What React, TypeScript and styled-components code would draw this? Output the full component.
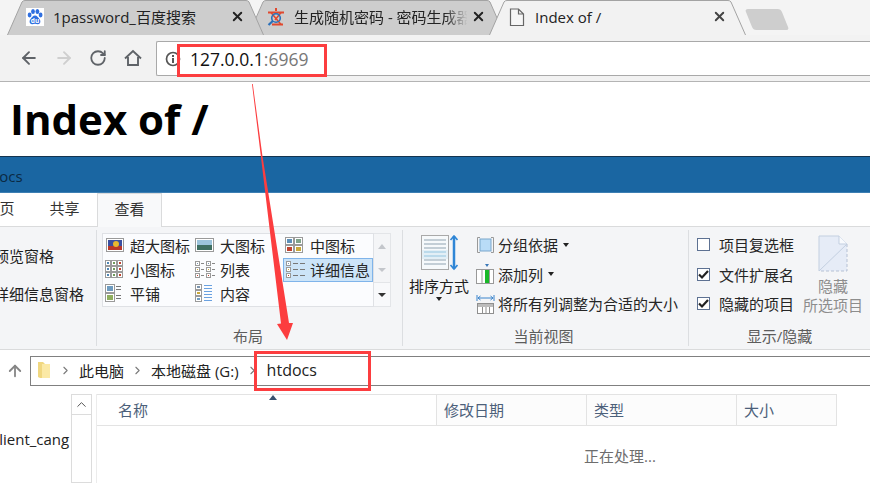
import React from "react";
import styled, { createGlobalStyle } from "styled-components";
import { ArrowLeft, ArrowRight, RotateCw, ArrowUp, ChevronRight, ChevronUp, X } from "lucide-react";

const GlobalStyle = createGlobalStyle`
  html, body {
    margin: 0;
    padding: 0;
    background: #fff;
  }
  * {
    box-sizing: border-box;
  }
`;

const Page = styled.div`
  position: relative;
  width: 870px;
  height: 483px;
  overflow: hidden;
  font-family: "Open Sans", "Noto Sans CJK SC", sans-serif;
  color: #1e1e1e;
`;

const TabStrip = styled.div`
  height: 35px;
  display: flex;
  padding-left: 7px;
  background: #f4f4f4;
`;

const BrowserTab = styled.div<{ $z: number }>`
  position: relative;
  z-index: ${(p) => p.$z};
  width: 257px;
  height: 35px;
  margin-right: -16px;
  display: flex;
  align-items: center;
  padding: 0 19px 2px 19px;
  font-size: 15px;
  color: #222;
`;

const TabShape = styled.svg`
  position: absolute;
  left: 0;
  top: 0;
  z-index: -1;
`;

const TabIcon = styled.svg`
  flex: none;
  width: 18px;
  height: 18px;
  margin-right: 9px;
`;

const TabTitle = styled.span<{ $fade?: boolean }>`
  flex: 1;
  white-space: nowrap;
  overflow: hidden;
  ${(p) => p.$fade && "mask-image: linear-gradient(to right, #000 85%, transparent 98%);"}
`;

const NewTab = styled.div`
  width: 36px;
  height: 21px;
  margin: 9px 0 0 19px;
  background: #cecece;
  border-radius: 3px;
  transform: skewX(22deg);
`;

const Toolbar = styled.div`
  height: 47px;
  display: flex;
  align-items: flex-start;
  padding: 6px 0 0 18px;
  background: #f2f2f2;
  border-bottom: 1px solid #b4b4b4;
`;

const NavButton = styled.div<{ $faded?: boolean }>`
  flex: none;
  width: 35px;
  height: 34px;
  display: flex;
  align-items: center;
  padding-left: 1px;
  color: ${(p) => (p.$faded ? "#cfcfcf" : "#5f6368")};
`;

const Omnibox = styled.div`
  flex: 1;
  height: 35px;
  margin-left: -2px;
  display: flex;
  align-items: center;
  padding-left: 8px;
  background: #fff;
  border: 1px solid #a9a9a9;
  border-right: none;
  border-radius: 2px 0 0 2px;
  font-size: 17.5px;
`;

const Url = styled.span`
  margin-left: 9px;
  color: #111;
`;

const UrlPort = styled.span`
  color: #777;
`;

const Heading = styled.h1`
  height: 74px;
  margin: 0;
  padding: 11px 0 0 10px;
  font-size: 42px;
  line-height: 52px;
  font-weight: 700;
  color: #000;
`;

const TitleBar = styled.div`
  height: 37px;
  padding: 10px 0 0 0;
  background: #1a66a2;
  border-top: 1px solid #14344f;
  border-bottom: 1px solid #3d7fb3;
  font-size: 15px;
  line-height: 18px;
  color: #0b2a44;
`;

const TitleText = styled.span`
  display: block;
  margin-left: -10px;
`;

const RibbonTabs = styled.div`
  height: 33px;
  display: flex;
  margin-left: -33px;
  font-size: 15px;
`;

const RibbonTab = styled.div<{ $active?: boolean }>`
  width: 65px;
  height: ${(p) => (p.$active ? "34px" : "33px")};
  padding-bottom: 4px;
  position: relative;
  z-index: 1;
  display: flex;
  align-items: center;
  justify-content: center;
  color: #333;
  ${(p) => p.$active && "background: #f8f9fa; border: 1px solid #dadbdc; border-bottom: none;"}
`;

const Ribbon = styled.div`
  height: 124px;
  display: flex;
  padding: 3px 0;
  background: #f4f5f7;
  border-top: 1px solid #dadbdc;
  border-bottom: 1px solid #dadbdc;
  font-size: 15px;
`;

const Group = styled.div<{ $width: number; $last?: boolean }>`
  flex: none;
  width: ${(p) => p.$width}px;
  display: flex;
  flex-direction: column;
  ${(p) => !p.$last && "border-right: 1px solid #dcdee1;"}
`;

const GroupBody = styled.div`
  flex: 1;
  display: flex;
`;

const GroupLabel = styled.div<{ $offset?: number }>`
  height: 18px;
  margin-left: ${(p) => p.$offset ?? 0}px;
  white-space: nowrap;
  text-align: center;
  font-size: 15px;
  line-height: 16px;
  color: #5c5c5c;
`;

const Panes = styled.div`
  padding-top: 8px;
  margin-left: -6px;
  white-space: nowrap;
`;

const PaneRow = styled.div`
  height: 38px;
  padding-bottom: 4px;
  display: flex;
  align-items: center;
`;

const Gallery = styled.div`
  display: flex;
  height: 74px;
  margin: 3px 0 0 5px;
`;

const GalleryGrid = styled.div`
  width: 272px;
  height: 74px;
  display: grid;
  grid-template-columns: repeat(3, 90px);
  grid-auto-rows: 24px;
  background: #fbfcfe;
  border: 1px solid #dfe1e5;
`;

const GalleryItem = styled.div<{ $selected?: boolean }>`
  display: flex;
  align-items: center;
  gap: 3px;
  padding: 0 0 2px 2px;
  white-space: nowrap;
  color: #262626;
  ${(p) => p.$selected && "background: #cce4f8; box-shadow: inset 0 0 0 1px #7fb4ea;"}
`;

const GalleryIconBox = styled.svg`
  flex: none;
  width: 22px;
  height: 20px;
`;

const GalleryScroll = styled.div`
  width: 17px;
  display: grid;
  grid-template-rows: 24px 24px 24px;
  border: 1px solid #e3e5e8;
  border-left: none;
`;

const ScrollCell = styled.div<{ $bordered?: boolean }>`
  display: flex;
  align-items: center;
  justify-content: center;
  ${(p) => p.$bordered && "border-top: 1px solid #e3e5e8; background: #f8f9fb;"}
`;

const Triangle = styled.span<{ $up?: boolean; $dark?: boolean }>`
  display: block;
  width: 0;
  height: 0;
  border-left: 4px solid transparent;
  border-right: 4px solid transparent;
  ${(p) =>
    p.$up
      ? `border-bottom: 5px solid ${p.$dark ? "#38506e" : "#c3c6cb"};`
      : `border-top: 4px solid ${p.$dark ? "#333" : "#c3c6cb"};`}
`;

const SortColumn = styled.div`
  flex: none;
  width: 66px;
  padding: 5px 0 0 6px;
  display: flex;
  flex-direction: column;
  align-items: center;
  white-space: nowrap;
`;

const SortLabel = styled.div`
  margin-top: 5px;
  height: 20px;
  line-height: 20px;
`;

const Caret = styled.span`
  display: inline-block;
  width: 0;
  height: 0;
  border-left: 3.5px solid transparent;
  border-right: 3.5px solid transparent;
  border-top: 4px solid #222;
`;

const SortCaret = styled(Caret)`
  margin-top: 1px;
`;

const ActionColumn = styled.div`
  margin-left: 7px;
  padding-top: 1px;
`;

const ActionRow = styled.div`
  height: 29.5px;
  padding-bottom: 2px;
  display: flex;
  align-items: center;
  white-space: nowrap;
  color: #262626;
`;

const ActionIcon = styled.svg`
  flex: none;
  width: 19px;
  height: 22px;
  margin-right: 3px;
`;

const ActionCaret = styled(Caret)`
  margin-left: 5px;
`;

const CheckColumn = styled.div`
  margin-left: 8px;
  padding-top: 1px;
  width: 106px;
`;

const CheckBox = styled.span`
  flex: none;
  width: 13px;
  height: 13px;
  margin-right: 9px;
  background: #fff;
  border: 1px solid #5d7192;
  display: flex;
  align-items: center;
  justify-content: center;
`;

const HideButton = styled.div`
  width: 60px;
  padding-top: 5px;
  display: flex;
  flex-direction: column;
  align-items: center;
  white-space: nowrap;
  color: #8d8d8d;
`;

const HideIcon = styled.svg`
  width: 30px;
  height: 37px;
  margin-bottom: 5px;
`;

const HideLine = styled.div`
  height: 19px;
  line-height: 19px;
`;

const NavBar = styled.div`
  height: 43px;
  display: flex;
  align-items: flex-start;
  padding-top: 6px;
  font-size: 15px;
`;

const UpButton = styled.div`
  width: 30px;
  height: 30px;
  display: flex;
  align-items: center;
  justify-content: center;
  color: #858585;
`;

const PathBox = styled.div`
  flex: 1;
  height: 30px;
  display: flex;
  align-items: center;
  padding: 0 0 2px 6px;
  border: 1px solid #808080;
  border-right: none;
  color: #222;
`;

const Crumb = styled.span<{ $large?: boolean }>`
  white-space: nowrap;
  font-size: ${(p) => (p.$large ? "16px" : "15px")};
`;

const Sep = styled.span<{ $w: number }>`
  flex: none;
  width: ${(p) => p.$w}px;
  display: flex;
  align-items: center;
  justify-content: center;
  color: #7a7a7a;
`;

const Lower = styled.div`
  height: 90px;
  display: flex;
  padding-top: 1px;
  font-size: 15px;
`;

const TreePane = styled.div`
  width: 71px;
  padding-top: 35px;
  overflow: hidden;
  white-space: nowrap;
`;

const TreeText = styled.div`
  margin-left: -8px;
  line-height: 20px;
  color: #222;
`;

const TreeScroll = styled.div`
  flex: none;
  width: 21px;
  border: 1px solid #dcdcdc;
`;

const TreeScrollUp = styled.div`
  height: 20px;
  display: flex;
  align-items: center;
  justify-content: center;
  color: #555;
  border-bottom: 1px solid #dcdcdc;
`;

const ListPane = styled.div`
  position: relative;
  flex: 1;
  margin-left: 4px;
  border-left: 1px solid #ececec;
`;

const SortMark = styled.div`
  position: absolute;
  left: 172px;
  top: 1px;
`;

const HeaderRow = styled.div`
  width: 740px;
  height: 32px;
  display: grid;
  grid-template-columns: 339px 150px 150px 100px;
  background: #fff;
  border: solid #e3e3e3;
  border-width: 1px 1px 1px 0;
  color: #4c607a;
`;

const HeaderCell = styled.div<{ $first?: boolean; $indent: number }>`
  display: flex;
  align-items: center;
  padding: 0 0 2px ${(p) => p.$indent}px;
  ${(p) => !p.$first && "background: #fcfcfc; border-left: 1px solid #e3e3e3;"}
`;

const Busy = styled.div`
  margin: 20px 0 0 487px;
  color: #6d6d6d;
  font-size: 15px;
  line-height: 20px;
`;

const Annotations = styled.svg`
  position: absolute;
  left: 0;
  top: 0;
  z-index: 5;
  pointer-events: none;
`;

const tabPath = "M0.5 35 L15 2 Q16 0.5 18 0.5 L239 0.5 Q241 0.5 242 2 L256.5 35";

const Shape: React.FC<{ fill: string; stroke: string }> = ({ fill, stroke }) => (
  <TabShape width="257" height="35" viewBox="0 0 257 35">
    <path d={tabPath} fill={fill} stroke={stroke} />
  </TabShape>
);

const BaiduIcon = () => (
  <TabIcon viewBox="0 0 18 18">
    <rect width="18" height="18" fill="#fff" />
    <g fill="#2f6fe0">
      <ellipse cx="3.6" cy="7" rx="1.9" ry="2.4" />
      <ellipse cx="7" cy="3.6" rx="1.9" ry="2.5" />
      <ellipse cx="11.4" cy="3.6" rx="1.9" ry="2.5" />
      <ellipse cx="14.6" cy="7" rx="1.9" ry="2.4" />
      <path d="M9 7.5c2.2 0 3 2 4.400 3.400 1.600 1.600 1.300 5-1.400 5.300-1.200.1-2-.5-3-.5s-1.800.6-3 .5c-2.700-.3-3-3.700-1.400-5.300C6 9.500 6.800 7.500 9 7.500z" />
    </g>
    <text x="9" y="15" textAnchor="middle" fontSize="6.500" fontWeight="700" fill="#fff" fontFamily="Open Sans, sans-serif">du</text>
  </TabIcon>
);

const StarIcon = () => (
  <TabIcon viewBox="0 0 18 18">
    <path d="M9 0v3M1 4.500h16M5 16.500h11" stroke="#e0492f" strokeWidth="2" fill="none" />
    <path d="M4 4.500l10 12M14 4.500L8 12" stroke="#e0492f" strokeWidth="1.600" fill="none" />
    <circle cx="9" cy="10" r="4.300" fill="none" stroke="#2a6fb8" strokeWidth="1.600" />
    <path d="M5.800 13L1.500 17" stroke="#2a6fb8" strokeWidth="2.200" fill="none" />
  </TabIcon>
);

const DocIcon = () => (
  <TabIcon viewBox="0 0 18 18">
    <path d="M2.500 1h8l5 5v11.500h-13z M10.500 1v5h5" fill="#f6f6f6" stroke="#666" strokeWidth="1.200" />
  </TabIcon>
);

const HomeIcon = () => (
  <svg width="18" height="18" viewBox="0 0 18 18" fill="none" stroke="#5f6368" strokeWidth="1.900">
    <path d="M1 9.500L9 2l8 7.500M4 8v8h10V8" />
  </svg>
);

const InfoIcon = () => (
  <svg width="16" height="16" viewBox="0 0 16 16">
    <circle cx="8" cy="8" r="6.500" fill="none" stroke="#555" strokeWidth="1.700" />
    <rect x="7" y="7" width="2" height="5" fill="#555" />
    <rect x="7" y="4" width="2" height="2" fill="#555" />
  </svg>
);

type ViewKind = "xl" | "lg" | "md" | "sm" | "list" | "detail" | "tile" | "content";

const Thumb: React.FC<{ x: number; y: number; w: number; h: number; c: string }> = ({ x, y, w, h, c }) => (
  <g>
    <rect x={x + 0.5} y={y + 0.5} width={w} height={h} fill="#fff" stroke="#9a9a9a" />
    <rect x={x + 2} y={y + 2} width={w - 3} height={h - 3} fill={c} />
  </g>
);

const ViewIcon: React.FC<{ kind: ViewKind }> = ({ kind }) => {
  const bars = (x: number, ys: number[], w: number, c: string) =>
    ys.map((y) => <rect key={`${x}-${y}`} x={x} y={y} width={w} height="1" fill={c} />);
  return (
    <GalleryIconBox viewBox="0 0 22 20">
      {kind === "xl" && (
        <g>
          <rect x="1.500" y="3.500" width="17" height="13" fill="#fff" stroke="#9a9a9a" />
          <rect x="3" y="5" width="14" height="10" fill="#3b4fa0" />
          <rect x="3" y="11" width="14" height="4" fill="#b8372a" />
          <circle cx="11" cy="9" r="3" fill="#e8b930" />
        </g>
      )}
      {kind === "lg" && (
        <g>
          <rect x="0.500" y="3.500" width="18" height="13" fill="#fff" stroke="#9a9a9a" />
          <rect x="2" y="5" width="15" height="5" fill="#9cc4dc" />
          <rect x="2" y="10" width="15" height="5" fill="#3f6f62" />
        </g>
      )}
      {kind === "md" && (
        <g>
          <Thumb x={0} y={2} w={8} h={7} c="#5d8fb8" />
          <Thumb x={9} y={2} w={8} h={7} c="#7fa38a" />
          <Thumb x={0} y={10} w={8} h={7} c="#c0432f" />
          <Thumb x={9} y={10} w={8} h={7} c="#c9a83a" />
        </g>
      )}
      {kind === "sm" &&
        [1, 7, 13].map((y) =>
          [0, 6, 12].map((x, i) => (
            <Thumb key={`${x}-${y}`} x={x} y={y} w={5} h={5} c={["#4f86b4", "#6f9a5a", "#c0432f"][i]} />
          ))
        )}
      {kind === "list" &&
        [0, 11].map((x) => (
          <g key={x}>
            <Thumb x={x} y={2} w={4} h={4} c="#7a93ad" />
            <Thumb x={x} y={8} w={4} h={4} c="#c9a83a" />
            <Thumb x={x} y={14} w={4} h={4} c="#c0432f" />
            {bars(x + 6, [4, 10, 16], 3, "#888")}
          </g>
        ))}
      {kind === "detail" && (
        <g>
          <Thumb x={1} y={2} w={4} h={4} c="#7a93ad" />
          <Thumb x={1} y={8} w={4} h={4} c="#c9a83a" />
          <Thumb x={1} y={14} w={4} h={4} c="#c0432f" />
          {bars(8, [4, 10, 16], 5, "#777")}
          {bars(15, [4, 10, 16], 5, "#777")}
        </g>
      )}
      {kind === "tile" && (
        <g>
          <Thumb x={0} y={1} w={9} h={8} c="#6f9cc0" />
          <Thumb x={0} y={10} w={9} h={8} c="#8fae5f" />
          {bars(11, [3, 6, 12, 15], 5, "#777")}
        </g>
      )}
      {kind === "content" && (
        <g>
          <Thumb x={0} y={1} w={6} h={5} c="#7a93ad" />
          <Thumb x={0} y={7} w={6} h={5} c="#c9a83a" />
          <Thumb x={0} y={13} w={6} h={5} c="#6f9cc0" />
          {bars(9, [2, 5, 8, 11, 14, 17], 8, "#6aa1e0")}
        </g>
      )}
    </GalleryIconBox>
  );
};

const SortIcon = () => (
  <svg width="37" height="36" viewBox="0 0 37 36">
    <rect x="0.500" y="0.500" width="27" height="34" fill="#f6f9fb" stroke="#a9a9a9" />
    {[4, 8, 12, 16, 20, 24, 28].map((y) => (
      <rect key={y} x="3" y={y} width="22" height="2" fill={y === 16 || y === 20 ? "#a7cfe4" : "#c3ced6"} />
    ))}
    <rect x="1" y="15" width="26" height="9" fill="#cfe5f2" opacity="0.500" />
    <path d="M33 1v33" stroke="#2f86d6" strokeWidth="2.500" />
    <path d="M29.500 5L33 1l3.500 4M29.500 30l3.500 4 3.500-4" stroke="#2f86d6" strokeWidth="1.600" fill="none" />
  </svg>
);

const GroupByIcon = () => (
  <ActionIcon viewBox="0 0 19 22">
    <path d="M4 3.500H1.500v15H4M15 3.500h2.500v15H15" fill="none" stroke="#999" />
    <rect x="4" y="5" width="11" height="12" fill="#b9dcf7" stroke="#7aa7cc" />
  </ActionIcon>
);

const AddColumnIcon = () => (
  <ActionIcon viewBox="0 0 19 22">
    <rect x="0.500" y="6.500" width="17" height="14" fill="#fff" stroke="#999" />
    <rect x="9" y="7" width="4" height="13" fill="#18b828" />
    <path d="M6 7v13M13.500 7v13" stroke="#999" />
    <path d="M9 1h4l-2 3z" fill="#3a78b8" />
  </ActionIcon>
);

const FitColumnsIcon = () => (
  <ActionIcon viewBox="0 0 19 22">
    <path d="M1 2v6M18 2v6M2 5h15" stroke="#3a84cc" fill="none" />
    <path d="M4.500 3L2 5l2.500 2M14.500 3L17 5l-2.500 2" stroke="#3a84cc" fill="none" />
    <rect x="1.500" y="10.500" width="16" height="10" fill="#fff" stroke="#8f8f8f" />
    <rect x="2" y="11" width="15" height="3" fill="#bcbcbc" />
    <path d="M6.500 14v6M10 14v6M13.500 14v6" stroke="#8f8f8f" />
  </ActionIcon>
);

const Check = () => (
  <svg width="11" height="11" viewBox="0 0 11 11" fill="none" stroke="#222" strokeWidth="2.200">
    <path d="M1 5.500l3 3L10 2" />
  </svg>
);

const FolderIcon = () => (
  <svg width="14" height="18" viewBox="0 0 14 18">
    <path d="M1 1h5l2 2v14H3l-2-1z" fill="#f0d780" />
    <rect x="5" y="3" width="8" height="14" fill="#fbe9a6" />
  </svg>
);

const GALLERY: { kind: ViewKind; label: string; selected?: boolean }[] = [
  { kind: "xl", label: "超大图标" },
  { kind: "lg", label: "大图标" },
  { kind: "md", label: "中图标" },
  { kind: "sm", label: "小图标" },
  { kind: "list", label: "列表" },
  { kind: "detail", label: "详细信息", selected: true },
  { kind: "tile", label: "平铺" },
  { kind: "content", label: "内容" },
];

const App: React.FC = () => {
  return (
    <Page>
      <GlobalStyle />
      <TabStrip>
        <BrowserTab $z={2}>
          <Shape fill="#cdcdcd" stroke="#a3a3a3" />
          <BaiduIcon />
          <TabTitle>1password_百度搜索</TabTitle>
          <X size={15} strokeWidth={3} color="#222" />
        </BrowserTab>
        <BrowserTab $z={1}>
          <Shape fill="#cdcdcd" stroke="#a3a3a3" />
          <StarIcon />
          <TabTitle $fade>生成随机密码 - 密码生成器在线工具</TabTitle>
          <X size={15} strokeWidth={3} color="#222" />
        </BrowserTab>
        <BrowserTab $z={3}>
          <Shape fill="#f2f2f2" stroke="#a3a3a3" />
          <DocIcon />
          <TabTitle>Index of /</TabTitle>
          <X size={15} strokeWidth={3} color="#444" />
        </BrowserTab>
        <NewTab />
      </TabStrip>
      <Toolbar>
        <NavButton>
          <ArrowLeft size={20} strokeWidth={2.3} />
        </NavButton>
        <NavButton $faded>
          <ArrowRight size={20} strokeWidth={2.3} />
        </NavButton>
        <NavButton>
          <RotateCw size={18} strokeWidth={2.4} />
        </NavButton>
        <NavButton>
          <HomeIcon />
        </NavButton>
        <Omnibox>
          <InfoIcon />
          <Url>
            127.0.0.1<UrlPort>:6969</UrlPort>
          </Url>
        </Omnibox>
      </Toolbar>
      <Heading>Index of /</Heading>
      <TitleBar>
        <TitleText>docs</TitleText>
      </TitleBar>
      <RibbonTabs>
        <RibbonTab>主页</RibbonTab>
        <RibbonTab>共享</RibbonTab>
        <RibbonTab $active>查看</RibbonTab>
      </RibbonTabs>
      <Ribbon>
        <Group $width={97}>
          <GroupBody>
            <Panes>
              <PaneRow>预览窗格</PaneRow>
              <PaneRow>详细信息窗格</PaneRow>
            </Panes>
          </GroupBody>
          <GroupLabel $offset={-180}>窗格</GroupLabel>
        </Group>
        <Group $width={306}>
          <GroupBody>
            <Gallery>
              <GalleryGrid>
                {GALLERY.map((item) => (
                  <GalleryItem key={item.kind} $selected={item.selected}>
                    <ViewIcon kind={item.kind} />
                    {item.label}
                  </GalleryItem>
                ))}
              </GalleryGrid>
              <GalleryScroll>
                <ScrollCell>
                  <Triangle $up />
                </ScrollCell>
                <ScrollCell>
                  <Triangle />
                </ScrollCell>
                <ScrollCell $bordered>
                  <Triangle $dark />
                </ScrollCell>
              </GalleryScroll>
            </Gallery>
          </GroupBody>
          <GroupLabel $offset={-3}>布局</GroupLabel>
        </Group>
        <Group $width={286}>
          <GroupBody>
            <SortColumn>
              <SortIcon />
              <SortLabel>排序方式</SortLabel>
              <SortCaret />
            </SortColumn>
            <ActionColumn>
              <ActionRow>
                <GroupByIcon />
                分组依据
                <ActionCaret />
              </ActionRow>
              <ActionRow>
                <AddColumnIcon />
                添加列
                <ActionCaret />
              </ActionRow>
              <ActionRow>
                <FitColumnsIcon />
                将所有列调整为合适的大小
              </ActionRow>
            </ActionColumn>
          </GroupBody>
          <GroupLabel $offset={-4}>当前视图</GroupLabel>
        </Group>
        <Group $width={181} $last>
          <GroupBody>
            <CheckColumn>
              <ActionRow>
                <CheckBox />
                项目复选框
              </ActionRow>
              <ActionRow>
                <CheckBox>
                  <Check />
                </CheckBox>
                文件扩展名
              </ActionRow>
              <ActionRow>
                <CheckBox>
                  <Check />
                </CheckBox>
                隐藏的项目
              </ActionRow>
            </CheckColumn>
            <HideButton>
              <HideIcon viewBox="0 0 30 37">
                <path d="M1 36V1h20l8 8v27z" fill="#e6ecf7" />
                <path d="M1 36V1h20l8 8" fill="none" stroke="#c3cfe0" />
                <path d="M21 1v8h8" fill="#f8fafd" stroke="#c3cfe0" />
                <path d="M29 9v27H1" fill="none" stroke="#b5c1d4" strokeDasharray="3 2" />
                <path d="M1 36L29 9" stroke="#c3cfe0" />
              </HideIcon>
              <HideLine>隐藏</HideLine>
              <HideLine>所选项目</HideLine>
            </HideButton>
          </GroupBody>
          <GroupLabel>显示/隐藏</GroupLabel>
        </Group>
      </Ribbon>
      <NavBar>
        <UpButton>
          <ArrowUp size={18} strokeWidth={2.4} />
        </UpButton>
        <PathBox>
          <FolderIcon />
          <Sep $w={28}>
            <ChevronRight size={13} strokeWidth={2} />
          </Sep>
          <Crumb>此电脑</Crumb>
          <Sep $w={27}>
            <ChevronRight size={13} strokeWidth={2} />
          </Sep>
          <Crumb>本地磁盘 (G:)</Crumb>
          <Sep $w={28}>
            <ChevronRight size={13} strokeWidth={2} />
          </Sep>
          <Crumb $large>htdocs</Crumb>
        </PathBox>
      </NavBar>
      <Lower>
        <TreePane>
          <TreeText>client_cang</TreeText>
        </TreePane>
        <TreeScroll>
          <TreeScrollUp>
            <ChevronUp size={15} strokeWidth={1.6} />
          </TreeScrollUp>
        </TreeScroll>
        <ListPane>
          <SortMark>
            <Triangle $up $dark />
          </SortMark>
          <HeaderRow>
            <HeaderCell $first $indent={21}>名称</HeaderCell>
            <HeaderCell $indent={7}>修改日期</HeaderCell>
            <HeaderCell $indent={7}>类型</HeaderCell>
            <HeaderCell $indent={7}>大小</HeaderCell>
          </HeaderRow>
          <Busy>正在处理...</Busy>
        </ListPane>
      </Lower>
      <Annotations width="870" height="483" viewBox="0 0 870 483">
        <rect x="178.500" y="45.500" width="147" height="30" fill="none" stroke="#fc3d3f" strokeWidth="3" />
        <rect x="255.500" y="352.500" width="114" height="37" fill="none" stroke="#fc3d3f" strokeWidth="3" />
        <path d="M252 84L252.800 84L262.300 155L289 323L293 323L287 340L277 324L281 323.500L260.700 155Z" fill="#fc3d3f" />
      </Annotations>
    </Page>
  );
};

export default App;
